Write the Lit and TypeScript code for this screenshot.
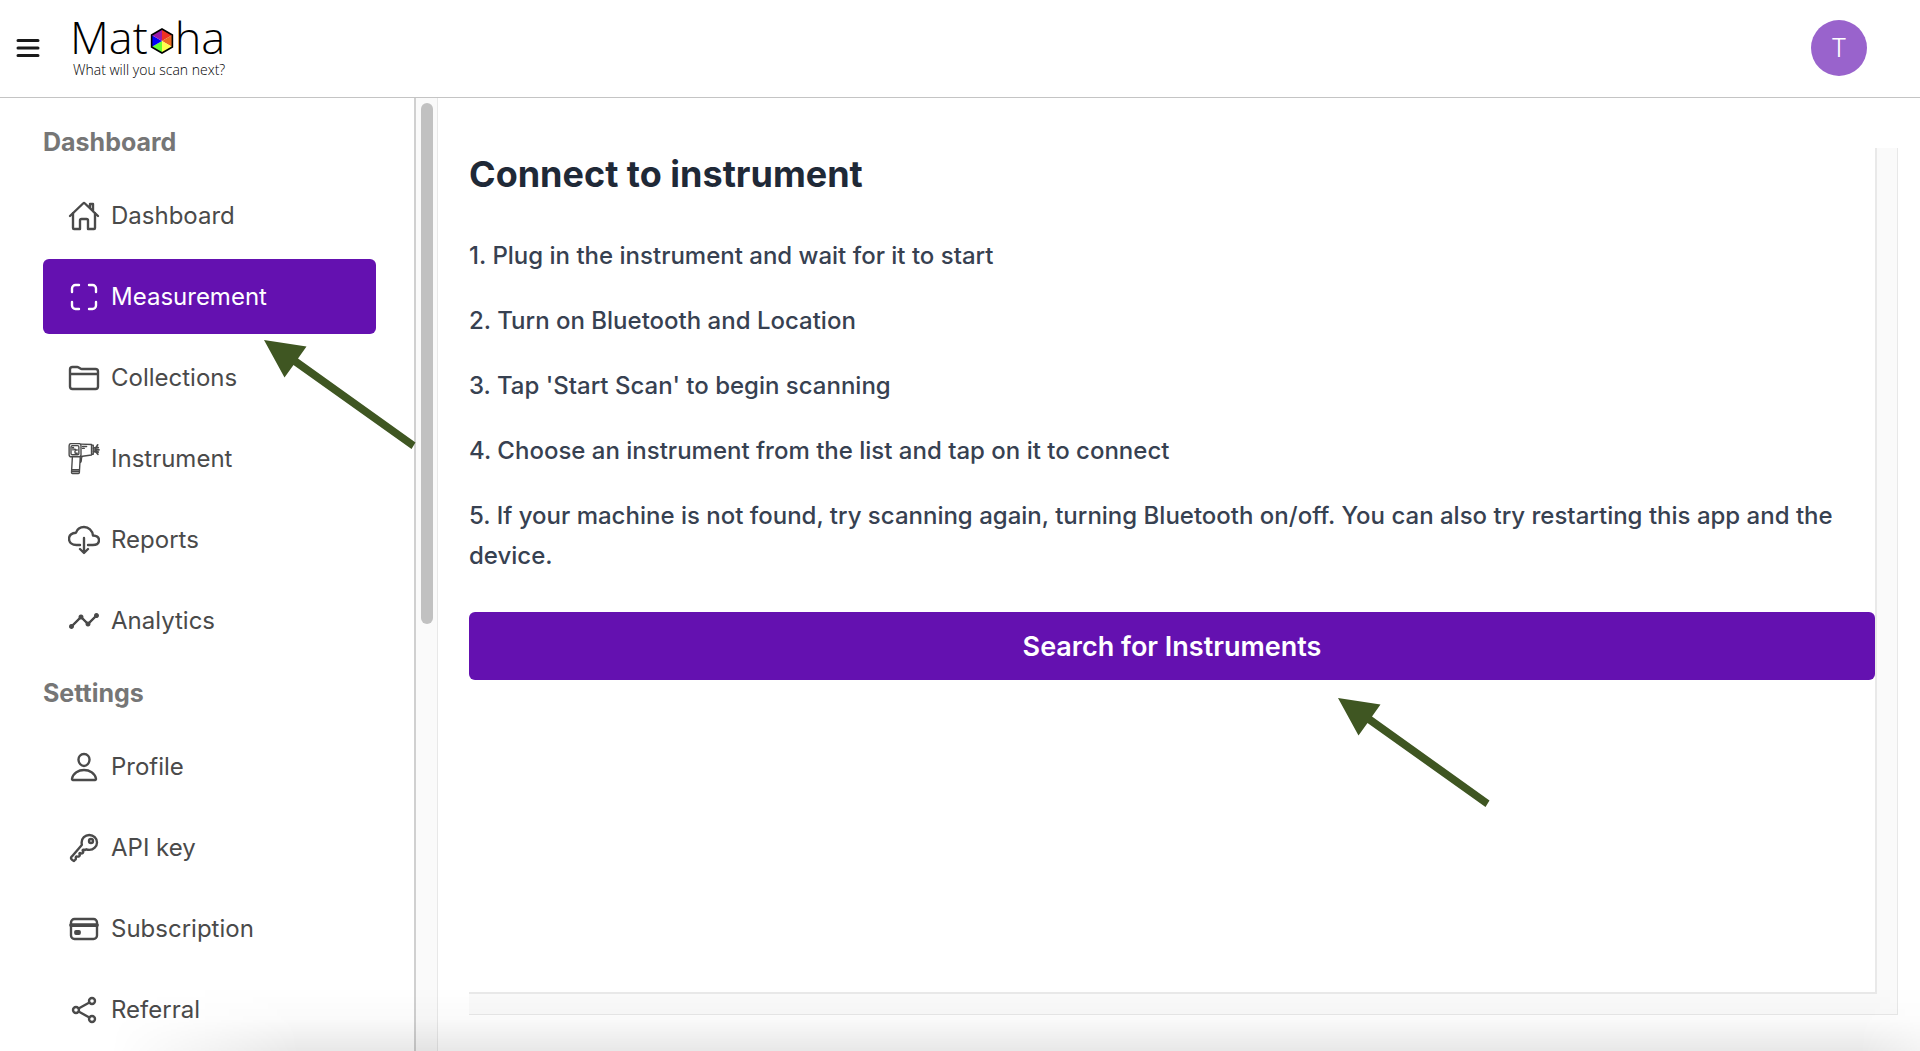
import { LitElement, html, css, svg } from "lit";
import { customElement, property } from "lit/decorators.js";
import { classMap } from "lit/directives/class-map.js";

const icons: Record<string, unknown> = {
  home: svg`<path d="M80 212v236a16 16 0 0016 16h96V328a24 24 0 0124-24h80a24 24 0 0124 24v136h96a16 16 0 0016-16V212"/><path d="M480 256L266.89 52c-5-5.28-16.69-5.34-21.78 0L32 256M400 179V64h-48v69"/>`,
  scan: svg`<path d="M336 448h56a56 56 0 0056-56v-56M448 176v-56a56 56 0 00-56-56h-56M176 448h-56a56 56 0 01-56-56v-56M64 176v-56a56 56 0 0156-56h56"/>`,
  folder: svg`<path d="M440 432H72a40 40 0 01-40-40V120a40 40 0 0140-40h75.89a40 40 0 0122.19 6.72l27.84 18.56a40 40 0 0022.19 6.72H440a40 40 0 0140 40v240a40 40 0 01-40 40zM32 192h448"/>`,
  instrument: svg`<g stroke-width="22"><rect x="18" y="10" width="190" height="210" rx="34"/><rect x="48" y="42" width="126" height="146" rx="22"/><path d="M68 70h20M80 74v38M104 100h10M148 112h-22a14 14 0 00-14 14v24a14 14 0 0014 14h22"/><path d="M208 18l168 6v168l-172 24M232 56h66M232 86h28M376 34h28v146h-28"/><path stroke-width="28" d="M408 84l44-16 22-38M430 108h66M408 134l44 14 26 32M440 84l44-10M440 134l44 10"/><path d="M70 226L56 472a16 16 0 0016 16h94a16 16 0 0016-16l14-246M62 428h122M198 316c28-14 4-52 26-96M64 456h118"/></g>`,
  cloud: svg`<path d="M320 336h76c55 0 100-21.21 100-75.6s-53-73.47-96-75.6C391.11 99.74 329 48 256 48c-69 0-113.44 45.79-128 91.2-60 5.7-112 35.88-112 98.4S70 336 136 336h56M192 400.1l64 63.9 64-63.9M256 224v224.03"/>`,
  analytics: svg`<path fill="currentColor" stroke="none" d="M456 128a40 40 0 00-37.23 54.6l-84.17 84.17a39.86 39.86 0 00-29.2 0l-60.17-60.17a40 40 0 10-74.46 0L70.6 306.77a40 40 0 1022.63 22.63L193.4 229.23a39.86 39.86 0 0029.2 0l60.17 60.17a40 40 0 1074.46 0l84.17-84.17A40 40 0 10456 128z"/><path d="M56 344L208 192l112 112 136-136"/>`,
  person: svg`<path d="M344 144c-3.92 52.87-44 96-88 96s-84.15-43.12-88-96c-4-55 35-96 88-96s92 42 88 96z"/><path d="M256 304c-87 0-175.3 48-191.64 138.6C62.39 453.52 68.57 464 80 464h352c11.44 0 17.62-10.48 15.65-21.4C431.3 352 343 304 256 304z"/>`,
  key: svg`<path d="M218.1 167.17c0 13 0 25.6 4.1 37.4-43.1 50.6-156.9 184.3-167.5 194.5a20.17 20.17 0 00-6.7 15c0 8.5 5.2 16.7 9.6 21.3 6.6 6.9 34.8 33 40 28 15.4-15 18.5-19 24.8-25.2 9.5-9.3-1-28.3 2.3-36s6.8-9.2 12.5-10.4 15.8 2.9 23.7 3c8.3.1 12.8-3.4 19-9.2 5-4.6 8.6-8.9 8.7-15.6.2-9-12.8-20.9-3.1-30.4s23.7 6.2 34 5 22.8-15.5 24.1-21.6-11.7-21.8-9.7-30.7c.7-3 6.8-10 11.4-11s25 6.9 29.6 5.9c5.6-1.2 12.1-7.1 17.4-10.4 15.5 6.7 29.6 9.4 47.7 9.4 68.5 0 124-53.4 124-119.2S408.5 48 340 48s-121.9 53.37-121.9 119.17zM400 144a32 32 0 11-32-32 32 32 0 0132 32z"/>`,
  card: svg`<rect x="48" y="96" width="416" height="320" rx="56"/><path stroke-width="60" d="M48 192h416M128 300h48v20h-48z"/>`,
  share: svg`<circle cx="128" cy="256" r="48"/><circle cx="384" cy="112" r="48"/><circle cx="384" cy="400" r="48"/><path d="M169.83 279.53l172.34 96.94M342.17 135.53l-172.34 96.94"/>`,
};

const groups = [
  {
    title: "Dashboard",
    items: [
      { label: "Dashboard", icon: "home" },
      { label: "Measurement", icon: "scan", active: true },
      { label: "Collections", icon: "folder" },
      { label: "Instrument", icon: "instrument" },
      { label: "Reports", icon: "cloud" },
      { label: "Analytics", icon: "analytics" },
    ],
  },
  {
    title: "Settings",
    items: [
      { label: "Profile", icon: "person" },
      { label: "API key", icon: "key" },
      { label: "Subscription", icon: "card" },
      { label: "Referral", icon: "share" },
    ],
  },
];

const steps = [
  "1. Plug in the instrument and wait for it to start",
  "2. Turn on Bluetooth and Location",
  "3. Tap 'Start Scan' to begin scanning",
  "4. Choose an instrument from the list and tap on it to connect",
  "5. If your machine is not found, try scanning again, turning Bluetooth on/off. You can also try restarting this app and the device.",
];

@customElement("nav-item")
class NavItem extends LitElement {
  @property() label = "";
  @property() icon = "";
  @property({ type: Boolean }) active = false;

  static styles = css`
    :host { display: block; }
    .link {
      display: flex;
      align-items: center;
      gap: 11px;
      height: 75px;
      padding-left: 25px;
      box-sizing: border-box;
      border-radius: 6px;
      color: #4a4a4a;
      font-size: 24px;
      line-height: 32px;
      text-decoration: none;
    }
    .active { background: #6411b0; color: #fff; }
    .icon {
      width: 32px;
      height: 32px;
      flex: none;
      fill: none;
      stroke: currentColor;
      stroke-width: 38;
      stroke-linecap: round;
      stroke-linejoin: round;
    }
  `;

  render() {
    return html`<a href="#" class=${classMap({ link: true, active: this.active })}>
      <svg class="icon" viewBox="0 0 512 512" aria-hidden="true">${icons[this.icon]}</svg>
      <span>${this.label}</span>
    </a>`;
  }
}

@customElement("app-root")
class AppRoot extends LitElement {
  static styles = css`
    :host {
      display: block;
      font-family: Inter, "Liberation Sans", sans-serif;
      background: #fff;
    }
    .page {
      position: relative;
      display: flex;
      flex-direction: column;
      height: 100vh;
      overflow: hidden;
    }
    .header {
      display: flex;
      align-items: center;
      flex: none;
      height: 96px;
      padding: 0 53px 1px 16px;
      border-bottom: 1px solid #c4c4c4;
    }
    .menu { display: flex; padding: 0; border: 0; background: none; }
    .menu-icon { width: 24px; height: 24px; stroke: #1a1a1a; stroke-width: 3; stroke-linecap: round; }
    .logo {
      display: flex;
      flex-direction: column;
      margin-left: 30px;
      color: #000;
      font-family: "Open Sans", sans-serif;
      font-weight: 300;
      text-decoration: none;
    }
    .brand { display: flex; align-items: center; font-size: 45px; line-height: 44px; }
    .hexagon { width: 24px; height: 28px; margin: 7px 1px 0 2px; }
    .tagline { padding-left: 3px; font-size: 14px; line-height: 22px; white-space: nowrap; }
    .avatar {
      width: 56px;
      height: 56px;
      margin-left: auto;
      padding: 0;
      border: 0;
      border-radius: 50%;
      background: #9963cc;
      color: #fff;
      font: 300 25px/56px Inter, sans-serif;
    }
    .body { display: flex; flex: 1; min-height: 0; }
    .sidebar {
      display: flex;
      flex-direction: column;
      flex: none;
      width: 414px;
      padding: 25px 38px 0 43px;
      box-sizing: border-box;
      overflow: hidden;
    }
    .group { display: flex; flex-direction: column; gap: 6px; padding-bottom: 16px; }
    .group-title {
      margin: 0 0 11px;
      color: #767676;
      font-size: 25px;
      font-weight: 700;
      line-height: 38px;
    }
    .scroll-track {
      flex: none;
      width: 12px;
      padding: 5px 4px 0 5px;
      border-left: 2px solid #d0d0d0;
      border-right: 1px solid #e8e8e8;
      background: #fafafa;
    }
    .scroll-thumb { height: 55%; border-radius: 6px; background: #c1c1c1; }
    .main {
      display: flex;
      flex: 1;
      min-width: 0;
      padding: 50px 22px 36px 31px;
    }
    .frame {
      display: flex;
      flex: 1;
      padding: 0 20px 20px 0;
      border: solid #e8e8e8;
      border-width: 0 1px 1px 0;
      background: #fafafa;
    }
    .panel {
      flex: 1;
      border: solid #e9e9e9;
      border-width: 0 2px 2px 0;
      background: #fff;
    }
    .title {
      margin: 0 0 36px;
      color: #1f2937;
      font-size: 36px;
      font-weight: 700;
      line-height: 52px;
    }
    .step {
      margin: 0 0 25px;
      color: #374151;
      font-size: 24px;
      font-weight: 500;
      line-height: 40px;
    }
    .search {
      display: block;
      width: 100%;
      height: 68px;
      margin-top: 36px;
      padding: 1px 0 0;
      border: 0;
      border-radius: 6px;
      background: #6411b0;
      color: #fff;
      font: 600 27px/40px Inter, sans-serif;
    }
    .arrow {
      position: absolute;
      width: 152px;
      height: 110px;
      fill: #3f5622;
      pointer-events: none;
    }
    .to-menu { left: 264px; top: 340px; }
    .to-search { left: 1338px; top: 698px; }
    .fade {
      position: absolute;
      inset: auto 0 0 0;
      height: 64px;
      background: linear-gradient(to bottom, rgba(0, 0, 0, 0), rgba(0, 0, 0, 0.02) 50%, rgba(0, 0, 0, 0.09));
      -webkit-mask-image: linear-gradient(to right, transparent 110px, #000 300px, #000 calc(100% - 60px), rgba(0, 0, 0, 0.5));
      mask-image: linear-gradient(to right, transparent 110px, #000 300px, #000 calc(100% - 60px), rgba(0, 0, 0, 0.5));
      pointer-events: none;
    }
  `;

  private arrow(name: string) {
    return html`<svg class="arrow ${name}" viewBox="0 0 152 110" aria-hidden="true">
      <path d="M0 0L42.5 6.5L34 18.5L151.5 102.5L147.5 109L29.5 25L20.5 37.5Z" />
    </svg>`;
  }

  render() {
    return html`<div class="page">
      <header class="header">
        <button class="menu" aria-label="Menu">
          <svg class="menu-icon" viewBox="0 0 24 24"><path d="M2 4.500h20M2 12h20M2 19.500h20" /></svg>
        </button>
        <a class="logo" href="#">
          <span class="brand">
            <span>Mat</span>
            <svg class="hexagon" viewBox="0 0 24 28" aria-hidden="true">
              <path fill="#ee3124" d="M12 14V2l10.400 6z" />
              <path fill="#ea6b20" d="M12 14l10.400-6v12z" />
              <path fill="#ffff4d" d="M12 14l10.400 6L12 26z" />
              <path fill="#66ff33" d="M12 14v12L1.600 20z" />
              <path fill="#0000fa" d="M12 14L1.600 20V8z" />
              <path fill="#9a1aa8" d="M12 14L1.600 8 12 2z" />
              <path fill="none" stroke="#000" stroke-width="1.600" d="M12 2l10.400 6v12L12 26 1.600 20V8z" />
            </svg>
            <span>ha</span>
          </span>
          <span class="tagline">What will you scan next?</span>
        </a>
        <button class="avatar" aria-label="Account T">T</button>
      </header>
      <div class="body">
        <nav class="sidebar">
          ${groups.map(
            (g) => html`<section class="group">
              <h2 class="group-title">${g.title}</h2>
              ${g.items.map(
                (i) => html`<nav-item .label=${i.label} .icon=${i.icon} .active=${!!(i as any).active}></nav-item>`
              )}
            </section>`
          )}
        </nav>
        <div class="scroll-track"><div class="scroll-thumb"></div></div>
        <main class="main">
          <div class="frame">
            <div class="panel">
              <h1 class="title">Connect to instrument</h1>
              ${steps.map((s) => html`<p class="step">${s}</p>`)}
              <button class="search">Search for Instruments</button>
            </div>
          </div>
        </main>
      </div>
      ${this.arrow("to-menu")} ${this.arrow("to-search")}
      <div class="fade"></div>
    </div>`;
  }
}
